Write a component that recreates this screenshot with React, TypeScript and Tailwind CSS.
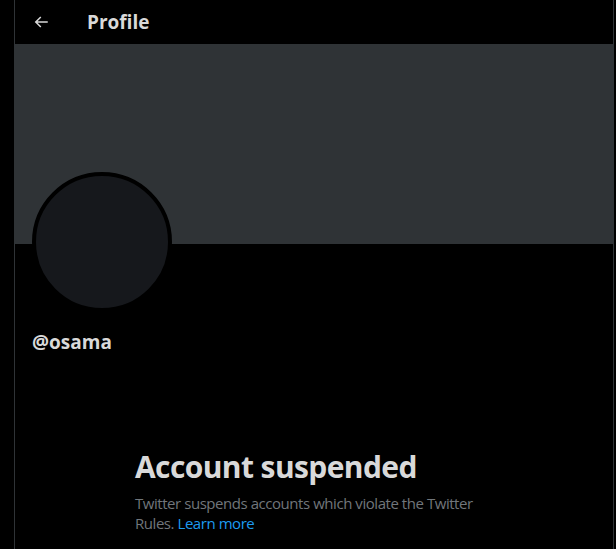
import React from "react";

export default function App() {
  return (
    <div
      className="w-[616px] h-[549px] bg-black flex overflow-hidden"
      style={{ fontFamily: '"Open Sans", "Noto Sans", sans-serif' }}
    >
      <div className="w-[14px] shrink-0" />
      <div className="w-[600px] shrink-0 h-full border-l border-r border-[#2f3336] flex flex-col">
        <div className="h-[44px] flex items-center pl-[17px]">
          <svg width="18" height="18" viewBox="0 0 24 24" className="text-[#d9d9d9]">
            <path
              d="M7.414 13l5.043 5.04-1.414 1.42L3.586 12l7.457-7.46 1.414 1.42L7.414 11H21v2H7.414z"
              fill="currentColor"
            />
          </svg>
          <span className="ml-[37px] text-[19px] font-bold text-[#d9d9d9] leading-[24px]">Profile</span>
        </div>
        <div className="h-[200px] bg-[#2f3336] shrink-0" />
        <div className="ml-[17px] -mt-[72px] w-[140px] h-[140px] rounded-full border-4 border-black bg-[#16181c] shrink-0" />
        <div className="ml-[17px] mt-[18px] text-[19px] font-bold text-[#d9d9d9] leading-[24px]">@osama</div>
        <div className="mt-[95px] flex justify-center">
          <div className="w-[358px]">
            <div className="text-[30px] font-bold text-[#d9d9d9] leading-[36px] tracking-[-0.6px]">
              Account suspended
            </div>
            <div className="mt-[8px] text-[15px] text-[#71767b] leading-[20px] tracking-[-0.45px]">
              Twitter suspends accounts which violate the Twitter Rules.{" "}
              <span className="text-[#1d9bf0]">Learn more</span>
            </div>
          </div>
        </div>
      </div>
    </div>
  );
}
